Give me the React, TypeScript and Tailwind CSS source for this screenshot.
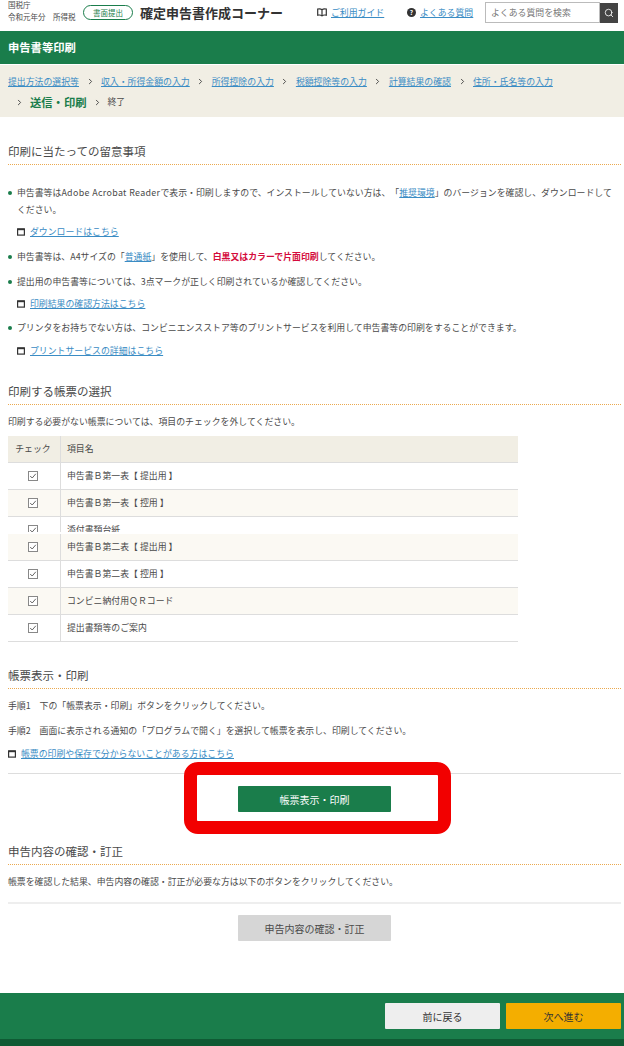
import { ChevronRight, Search } from "lucide-react";
import type { ReactNode } from "react";

const font = { fontFamily: '"Noto Sans CJK JP", "Noto Sans", sans-serif' };

const crumbs = [
  "提出方法の選択等",
  "収入・所得金額の入力",
  "所得控除の入力",
  "税額控除等の入力",
  "計算結果の確認",
  "住所・氏名等の入力",
];

const rows = [
  { name: "申告書Ｂ第一表【 提出用 】", tint: false },
  { name: "申告書Ｂ第一表【 控用 】", tint: true },
  { name: "添付書類台紙", tint: false, clipped: true },
  { name: "申告書Ｂ第二表【 提出用 】", tint: true },
  { name: "申告書Ｂ第二表【 控用 】", tint: false },
  { name: "コンビニ納付用ＱＲコード", tint: true },
  { name: "提出書類等のご案内", tint: false },
];

const Heading = ({ children, className }: { children: ReactNode; className: string }) => (
  <h2
    className={`h-[27px] border-b border-dotted border-[#eba94f] text-[11.5px] leading-[26px] text-[#4a4a4a] ${className}`}
  >
    {children}
  </h2>
);

const Line = ({ children, className }: { children: ReactNode; className: string }) => (
  <p className={`h-[17px] whitespace-nowrap text-[8.9px] leading-[17px] text-[#4a4a4a] ${className}`}>{children}</p>
);

const Anchor = ({ children }: { children: ReactNode }) => (
  <a className="text-[#3a8cc4] underline">{children}</a>
);

const WindowIcon = () => (
  <svg width="8" height="8" viewBox="0 0 8 8" className="mr-[5px] inline-block align-[-1px]">
    <rect x="0.6" y="0.9" width="6.8" height="6.2" fill="none" stroke="#333" strokeWidth="1.2" />
    <rect x="0.6" y="0.6" width="6.8" height="1.6" fill="#333" />
  </svg>
);

const GuideIcon = () => (
  <svg width="10" height="9" viewBox="0 0 10 9" fill="none" stroke="#333" strokeWidth="1.2">
    <path d="M5 1.6 C4 0.8 2 0.7 0.7 1 V7.2 C2 6.9 4 7 5 7.9 C6 7 8 6.9 9.3 7.2 V1 C8 0.7 6 0.8 5 1.6 Z" />
    <path d="M5 1.6 V7.9" />
  </svg>
);

const Bullet = () => (
  <span className="absolute top-[6.5px] left-0 h-[4px] w-[4px] rounded-full bg-[#1a7d4b]" />
);

const CheckIcon = () => (
  <svg width="10" height="10" viewBox="0 0 10 10">
    <rect x="0.5" y="0.5" width="9" height="9" fill="#fff" stroke="#888" />
    <path d="M2.2 5 L4.2 7 L7.8 2.8" fill="none" stroke="#666" strokeWidth="1" />
  </svg>
);

export default function App() {
  return (
    <div className="h-[1046px] w-[624px] overflow-hidden bg-white [text-spacing-trim:space-all]" style={font}>
      {/* header */}
      <header className="flex h-[31px] items-center pb-[6px] text-[#4a4a4a]">
        <div className="mb-[3px] ml-[8px] w-[75px] text-[7.5px] leading-[12px]">
          <div>国税庁</div>
          <div>令和元年分　所得税</div>
        </div>
        <span className="flex h-[15px] w-[50px] items-center justify-center rounded-full border border-[#1a7d4b] text-[7.5px] text-[#1a7d4b]">
          書面提出
        </span>
        <span className="ml-[7px] w-[177px] text-[13px] font-bold whitespace-nowrap text-[#333]">
          確定申告書作成コーナー
        </span>
        <GuideIcon />
        <a className="ml-[4px] w-[76px] text-[8.9px] text-[#3a8cc4] underline">ご利用ガイド</a>
        <span className="flex h-[9px] w-[9px] items-center justify-center rounded-full bg-[#333] text-[6.5px] leading-none font-bold text-white">
          ?
        </span>
        <a className="ml-[4px] w-[65px] text-[8.9px] text-[#3a8cc4] underline">よくある質問</a>
        <div className="flex h-[21px] w-[115px] items-center border border-[#bbb] pl-[5px] text-[8.9px] text-[#777]">
          よくある質問を検索
        </div>
        <div className="flex h-[20px] w-[18px] items-center justify-center bg-[#444]">
          <Search size={10} strokeWidth={2} className="text-white" />
        </div>
      </header>

      {/* page title */}
      <div className="flex h-[33px] items-center bg-[#1a7d4b] pl-[8px] text-[11.3px] font-bold text-white">
        申告書等印刷
      </div>

      {/* steps */}
      <nav className="mt-px h-[52px] bg-[#f1eee4] pl-[8px] text-[8.9px]">
        <div className="flex h-[32px] items-center pt-[1px]">
          {crumbs.map((c, i) => (
            <span key={c} className="flex items-center">
              {i > 0 && <ChevronRight size={9} strokeWidth={2.5} className="mx-[6.5px] text-[#444]" />}
              <a className="text-[#3a8cc4] underline">{c}</a>
            </span>
          ))}
        </div>
        <div className="flex h-[10px] items-center pl-[7px] text-[#4a4a4a]">
          <ChevronRight size={9} strokeWidth={2.5} className="text-[#444]" />
          <span className="ml-[6px] text-[11.3px] font-bold text-[#1a7d4b]">送信・印刷</span>
          <ChevronRight size={9} strokeWidth={2.5} className="mx-[6px] text-[#444]" />
          <span>終了</span>
        </div>
      </nav>

      <main className="pr-[3px] pl-[8px]">
        <Heading className="mt-[21px]">印刷に当たっての留意事項</Heading>
        <div className="relative mt-[19px] pl-[9px]">
          <Bullet />
          <Line className="">
            申告書等は<span className="tracking-[0.35px]">Adobe Acrobat Reader</span>で表示・印刷しますので、インストールしていない方は、「<Anchor>推奨環境</Anchor>」のバージョンを確認し、ダウンロードして
          </Line>
          <Line className="">ください。</Line>
        </div>
        <Line className="mt-[5px] pl-[9px]">
          <WindowIcon />
          <Anchor>ダウンロードはこちら</Anchor>
        </Line>
        <div className="relative mt-[8px] pl-[9px]">
          <Bullet />
          <Line className="">
            申告書等は、A4サイズの「<Anchor>普通紙</Anchor>」を使用して、
            <strong className="font-bold text-[#d40b3c]">白黒又はカラーで片面印刷</strong>してください。
          </Line>
        </div>
        <div className="relative mt-[8px] pl-[9px]">
          <Bullet />
          <Line className="">提出用の申告書等については、3点マークが正しく印刷されているか確認してください。</Line>
        </div>
        <Line className="mt-[5px] pl-[9px]">
          <WindowIcon />
          <Anchor>印刷結果の確認方法はこちら</Anchor>
        </Line>
        <div className="relative mt-[7px] pl-[9px]">
          <Bullet />
          <Line className="">
            プリンタをお持ちでない方は、コンビニエンスストア等のプリントサービスを利用して申告書等の印刷をすることができます。
          </Line>
        </div>
        <Line className="mt-[6px] pl-[9px]">
          <WindowIcon />
          <Anchor>プリントサービスの詳細はこちら</Anchor>
        </Line>

        <Heading className="mt-[19px]">印刷する帳票の選択</Heading>
        <Line className="mt-[8px]">印刷する必要がない帳票については、項目のチェックを外してください。</Line>

        <div className="mt-[6px] w-[510px] text-[8.9px] text-[#4a4a4a]">
          <div className="flex h-[27px] items-center border-b border-[#ddd] bg-[#f1eee4]">
            <span className="flex h-full w-[53px] items-center justify-center border-r border-[#ddd] pr-[2px]">チェック</span>
            <span className="pl-[6px]">項目名</span>
          </div>
          {rows.map((r) => (
            <div
              key={r.name}
              className={
                r.clipped
                  ? "h-[17px] bg-white"
                  : `h-[27px] border-b border-[#ddd] ${r.tint ? "bg-[#fbf9f3]" : "bg-white"}`
              }
            >
              <div className={`flex overflow-hidden ${r.clipped ? "h-[15px]" : "h-[26px]"}`}>
                <span className="flex h-[26px] w-[53px] shrink-0 items-center justify-center border-r border-[#ddd] pr-[2px]">
                  <CheckIcon />
                </span>
                <span className="flex h-[26px] items-center pl-[6px]">{r.name}</span>
              </div>
            </div>
          ))}
        </div>

        <Heading className="mt-[20px]">帳票表示・印刷</Heading>
        <Line className="mt-[8px]">手順1　下の「帳票表示・印刷」ボタンをクリックしてください。</Line>
        <Line className="mt-[8px]">手順2　画面に表示される通知の「プログラムで開く」を選択して帳票を表示し、印刷してください。</Line>
        <Line className="mt-[6px]">
          <WindowIcon />
          <Anchor>帳票の印刷や保存で分からないことがある方はこちら</Anchor>
        </Line>
        <hr className="mt-[11px] border-[#ddd]" />

        <div className="relative mt-[12px] ml-[230px] h-[26px] w-[153px]">
          {/* annotation drawn over the page */}
          <div className="absolute -top-[24px] -right-[60px] -bottom-[22px] -left-[54px] rounded-[14px] border-[13px] border-[#f20000] bg-white" />
          <button className="relative flex h-full w-full items-center justify-center rounded-[1px] bg-[#1a7d4b] text-[10px] text-white">
            帳票表示・印刷
          </button>
        </div>

        <Heading className="mt-[26px]">申告内容の確認・訂正</Heading>
        <Line className="mt-[8px]">帳票を確認した結果、申告内容の確認・訂正が必要な方は以下のボタンをクリックしてください。</Line>
        <hr className="mt-[12px] border-t-2 border-[#eee]" />
        <button className="mt-[11px] ml-[230px] flex h-[26px] w-[153px] items-center justify-center rounded-[1px] bg-[#d6d6d6] text-[10px] text-[#4a4a4a]">
          申告内容の確認・訂正
        </button>
      </main>

      {/* footer */}
      <footer className="mt-[52px]">
        <div className="flex h-[46px] items-center justify-end gap-[6px] bg-[#1a7d4b] pr-[3px]">
          <button className="h-[26px] w-[115px] rounded-[1px] bg-[#eeeeee] text-[10px] text-[#333]">前に戻る</button>
          <button className="h-[26px] w-[115px] rounded-[1px] bg-[#f4ae00] text-[10px] text-[#333]">次へ進む</button>
        </div>
        <div className="h-[7px] bg-[#0f5a34]" />
      </footer>
    </div>
  );
}
